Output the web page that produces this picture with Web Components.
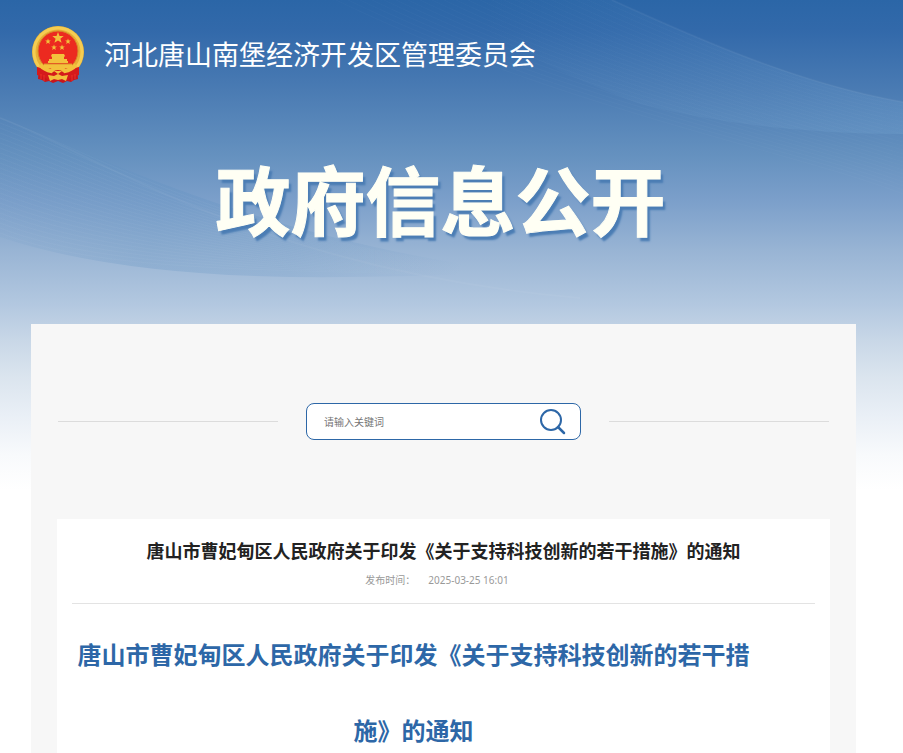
<!DOCTYPE html>
<html lang="zh-CN">
<head>
  <meta charset="UTF-8">
  <meta name="viewport" content="width=device-width, initial-scale=1">
  <title>政府信息公开</title>
  <style>
    body {
      margin: 0;
      background: #fff;
      font-family: "Noto Sans CJK SC", sans-serif;
    }
    a {
      color: inherit;
      text-decoration: none;
    }
    time {
      font-family: "Noto Sans", sans-serif;
    }
  </style>
</head>
<body>

<template id="gov-page-template">
  <style>
    :host {
      display: block;
      position: relative;
      padding: 0 47px 0 31px;
      background: linear-gradient(#2b66a7 0, #3269aa 30px, #4a7bb3 90px, #6591bf 155px, #7b9fca 200px, #98b4d4 250px, #b3c8e0 305px, #c8d7e7 340px, #dae4ee 375px, #e9eff6 415px, #f8fafc 455px, #fff 490px) no-repeat;
      overflow: hidden;
    }
    .waves {
      position: absolute;
      top: 0;
      left: 0;
      width: 100%;
      height: 330px;
    }
    .content {
      position: relative;
    }
  </style>
  <svg class="waves" viewBox="0 0 903 330" preserveAspectRatio="none" fill="none" aria-hidden="true">
    <defs>
      <linearGradient id="shade" gradientUnits="userSpaceOnUse" x1="0" x2="520" y1="90" y2="270">
        <stop offset="0" stop-color="#5d8fc0" stop-opacity="0"/>
        <stop offset=".35" stop-color="#5d8fc0" stop-opacity=".25"/>
        <stop offset=".6" stop-color="#5d8fc0" stop-opacity=".2"/>
        <stop offset=".9" stop-color="#5d8fc0" stop-opacity="0"/>
      </linearGradient>
      <linearGradient id="sheen" gradientUnits="userSpaceOnUse" x1="480" x2="903" y1="0" y2="0">
        <stop offset="0" stop-color="#8fc0e8" stop-opacity="0"/>
        <stop offset="1" stop-color="#8fc0e8" stop-opacity=".14"/>
      </linearGradient>
      <linearGradient id="strand" gradientUnits="userSpaceOnUse" x1="0" x2="480" y1="0" y2="0">
        <stop offset="0" stop-color="#fff" stop-opacity=".03"/>
        <stop offset=".5" stop-color="#fff" stop-opacity=".03"/>
        <stop offset="1" stop-color="#fff" stop-opacity="0"/>
      </linearGradient>
    </defs>
    <path fill="url(#shade)" d="M0 118C100 156 260 240 520 272Q400 278 290 277Q110 274 0 237Z"/>
    <path fill="url(#sheen)" d="M440 0H612C700 40 800 84 903 102V134Q760 134 640 104Q520 60 440 0Z"/>
    <path class="left" stroke="url(#strand)"/>
    <path class="right" stroke="#fff" stroke-opacity=".02"/>
    <path stroke="#fff" stroke-opacity=".04" stroke-width="2" d="M612 0C700 40 800 84 903 102M0 118C100 156 260 270 580 298"/>
  </svg>
  <div class="content"><slot></slot></div>
</template>

<template id="site-brand-template">
  <style>
    :host {
      display: flex;
      align-items: center;
      gap: 19px;
      padding-top: 24px;
      height: 60px;
      color: #fff;
      font-size: 27px;
      line-height: 40px;
    }
    svg {
      width: 54px;
      height: 58px;
      flex: none;
    }
  </style>
  <svg viewBox="0 0 54 58" role="img" aria-label="国徽">
    <path fill="#c9151b" d="M8 40L7 54l4 1 3 2 4-1 4 2 5-2 5 2 4-2 4 1 3-2 4-1-1-14Z"/>
    <circle cx="27" cy="27" r="26" fill="#e8b136"/>
    <circle cx="27" cy="27" r="24" fill="none" stroke="#f5cd52" stroke-width="3"/>
    <circle cx="27" cy="26" r="20" fill="#ec2a20" stroke="#d9862a"/>
    <g fill="#f3c13c">
      <path id="star" d="M27 7l1.500 4 4.200.100-3.300 2.600 1.200 4.100-3.600-2.400-3.600 2.400 1.200-4.100-3.300-2.600 4.200-.100Z"/>
      <use href="#star" transform="translate(3.500 10) scale(.5)"/>
      <use href="#star" transform="translate(23.500 10) scale(.5)"/>
      <use href="#star" transform="translate(9.500 16) scale(.5)"/>
      <use href="#star" transform="translate(17.500 16) scale(.5)"/>
      <path d="M20 31l1-2h12l1 2-1 1v2h3v2h1v2H17v-2h1v-2h3v-2ZM13 39h28v4H13Z"/>
    </g>
    <path fill="none" stroke="#dd8f2a" stroke-width="1" d="M13 39h28"/>
    <path fill="#d51a1b" d="M6 42q7 1 12 5 3-4 9-4t9 4q5-4 12-5v8q-7 1-11 5H17q-4-4-11-5Z"/>
    <path fill="none" stroke="#f3c13c" stroke-width="4" d="M9 40q5 5 11 6 3-3 7-3t7 3q6-1 11-6"/>
    <path fill="#f3c13c" d="M17 50l6 1 4-2 4 2 6-1-2 6-4-2-4 1-4-1-4 2ZM23 46h8l-4 3Z"/>
    <path fill="none" stroke="#ed3027" d="M10 49v5M13 50v6M41 50v6M44 49v5"/>
  </svg>
  <slot></slot>
</template>

<template id="page-banner-template">
  <style>
    :host {
      display: block;
      padding: 56px 0 69px;
      text-align: center;
    }
    h1 {
      margin: 0 6px 0 0;
      color: #fffff4;
      font-size: 75px;
      font-weight: 700;
      line-height: 115px;
      -webkit-text-stroke: 1px #fffff4;
      text-shadow: 3px 4px 2px #4b7db4;
    }
  </style>
  <h1><slot></slot></h1>
</template>

<template id="main-panel-template">
  <style>
    :host {
      display: block;
      padding: 79px 26px 0;
      background: #f7f7f7;
    }
  </style>
  <slot></slot>
</template>

<template id="search-bar-template">
  <style>
    :host {
      display: grid;
      grid-template-columns: 1fr 275px 1fr;
      align-items: center;
      gap: 28px;
      padding: 0 1px 79px;
    }
    hr {
      width: 100%;
      margin: 0;
      border: 0;
      border-top: 1px solid #dcdcdc;
    }
    form {
      display: flex;
      box-sizing: border-box;
      height: 37px;
      border: 1px solid #2d67a7;
      border-radius: 8px;
      background: #fff;
      overflow: hidden;
    }
    input {
      flex: 1;
      min-width: 0;
      padding: 0 0 0 17px;
      border: 0;
      outline: 0;
      background: none;
      font: 10px "Noto Sans CJK SC", sans-serif;
    }
    input::placeholder {
      color: #757575;
    }
    button {
      display: flex;
      align-items: center;
      padding: 0 13px 0 8px;
      border: 0;
      background: none;
      cursor: pointer;
    }
  </style>
  <hr>
  <form role="search">
    <input type="text" placeholder="请输入关键词" aria-label="请输入关键词">
    <button type="button" aria-label="搜索">
      <svg width="28" height="28" viewBox="0 0 28 28" fill="none" stroke="#2d67a7" stroke-width="2">
        <circle cx="12" cy="12" r="10"/>
        <path d="M19 19l6 6" stroke-linecap="round" stroke-width="2.500"/>
      </svg>
    </button>
  </form>
  <hr>
</template>

<template id="news-article-template">
  <style>
    :host {
      display: block;
      padding: 18px 15px 0;
      background: #fff;
    }
    header {
      padding-bottom: 15px;
      border-bottom: 1px solid #e3e3e3;
      text-align: center;
    }
    h2 {
      margin: 0;
      color: #222;
      font-size: 18px;
      line-height: 27px;
    }
    .meta {
      display: flex;
      justify-content: center;
      gap: 13px;
      margin-top: 8px;
      padding-right: 13px;
      color: #999;
      font-size: 10px;
      line-height: 16px;
    }
    .body {
      padding: 12px 60px 0 0;
      color: #2d67a7;
      font-size: 24px;
      font-weight: 700;
      line-height: 76px;
      text-align: center;
    }
  </style>
  <header>
    <h2><slot name="title"></slot></h2>
    <div class="meta">
      <span>发布时间：</span>
      <slot name="time"></slot>
    </div>
  </header>
  <div class="body"><slot></slot></div>
</template>

<gov-page>
  <site-brand><a href="#">河北唐山南堡经济开发区管理委员会</a></site-brand>
  <page-banner>政府信息公开</page-banner>
  <main-panel>
    <search-bar></search-bar>
    <news-article>
      <span slot="title">唐山市曹妃甸区人民政府关于印发《关于支持科技创新的若干措施》的通知</span>
      <time slot="time" datetime="2025-03-25T16:01">2025-03-25 16:01</time>
      唐山市曹妃甸区人民政府关于印发《关于支持科技创新的若干措施》的通知
    </news-article>
  </main-panel>
</gov-page>

<script>
  class TemplateElement extends HTMLElement {
    constructor() {
      super();
      const template = document.getElementById(this.localName + '-template');
      this.attachShadow({mode: 'open'}).appendChild(template.content.cloneNode(true));
    }
  }

  class GovPage extends TemplateElement {
    constructor() {
      super();
      // fine parallel strands on both sides of the sky
      let left = '';
      let right = '';
      for (let i = 0; i < 24; i++) {
        const y = i * 5;
        left += `M0 ${118 + y}C100 ${156 + y} 240 ${240 + y / 4} 480 ${266 + y / 12}`;
        right += `M${612 - i * 12} 0C${700 - i * 6} ${40 + i * 3} 800 ${84 + i * 3} 903 ${102 + i * 4}`;
      }
      this.shadowRoot.querySelector('.left').setAttribute('d', left);
      this.shadowRoot.querySelector('.right').setAttribute('d', right);
    }
  }

  customElements.define('gov-page', GovPage);
  for (const name of ['site-brand', 'page-banner', 'main-panel', 'search-bar', 'news-article']) {
    customElements.define(name, class extends TemplateElement {});
  }
</script>
</body>
</html>
